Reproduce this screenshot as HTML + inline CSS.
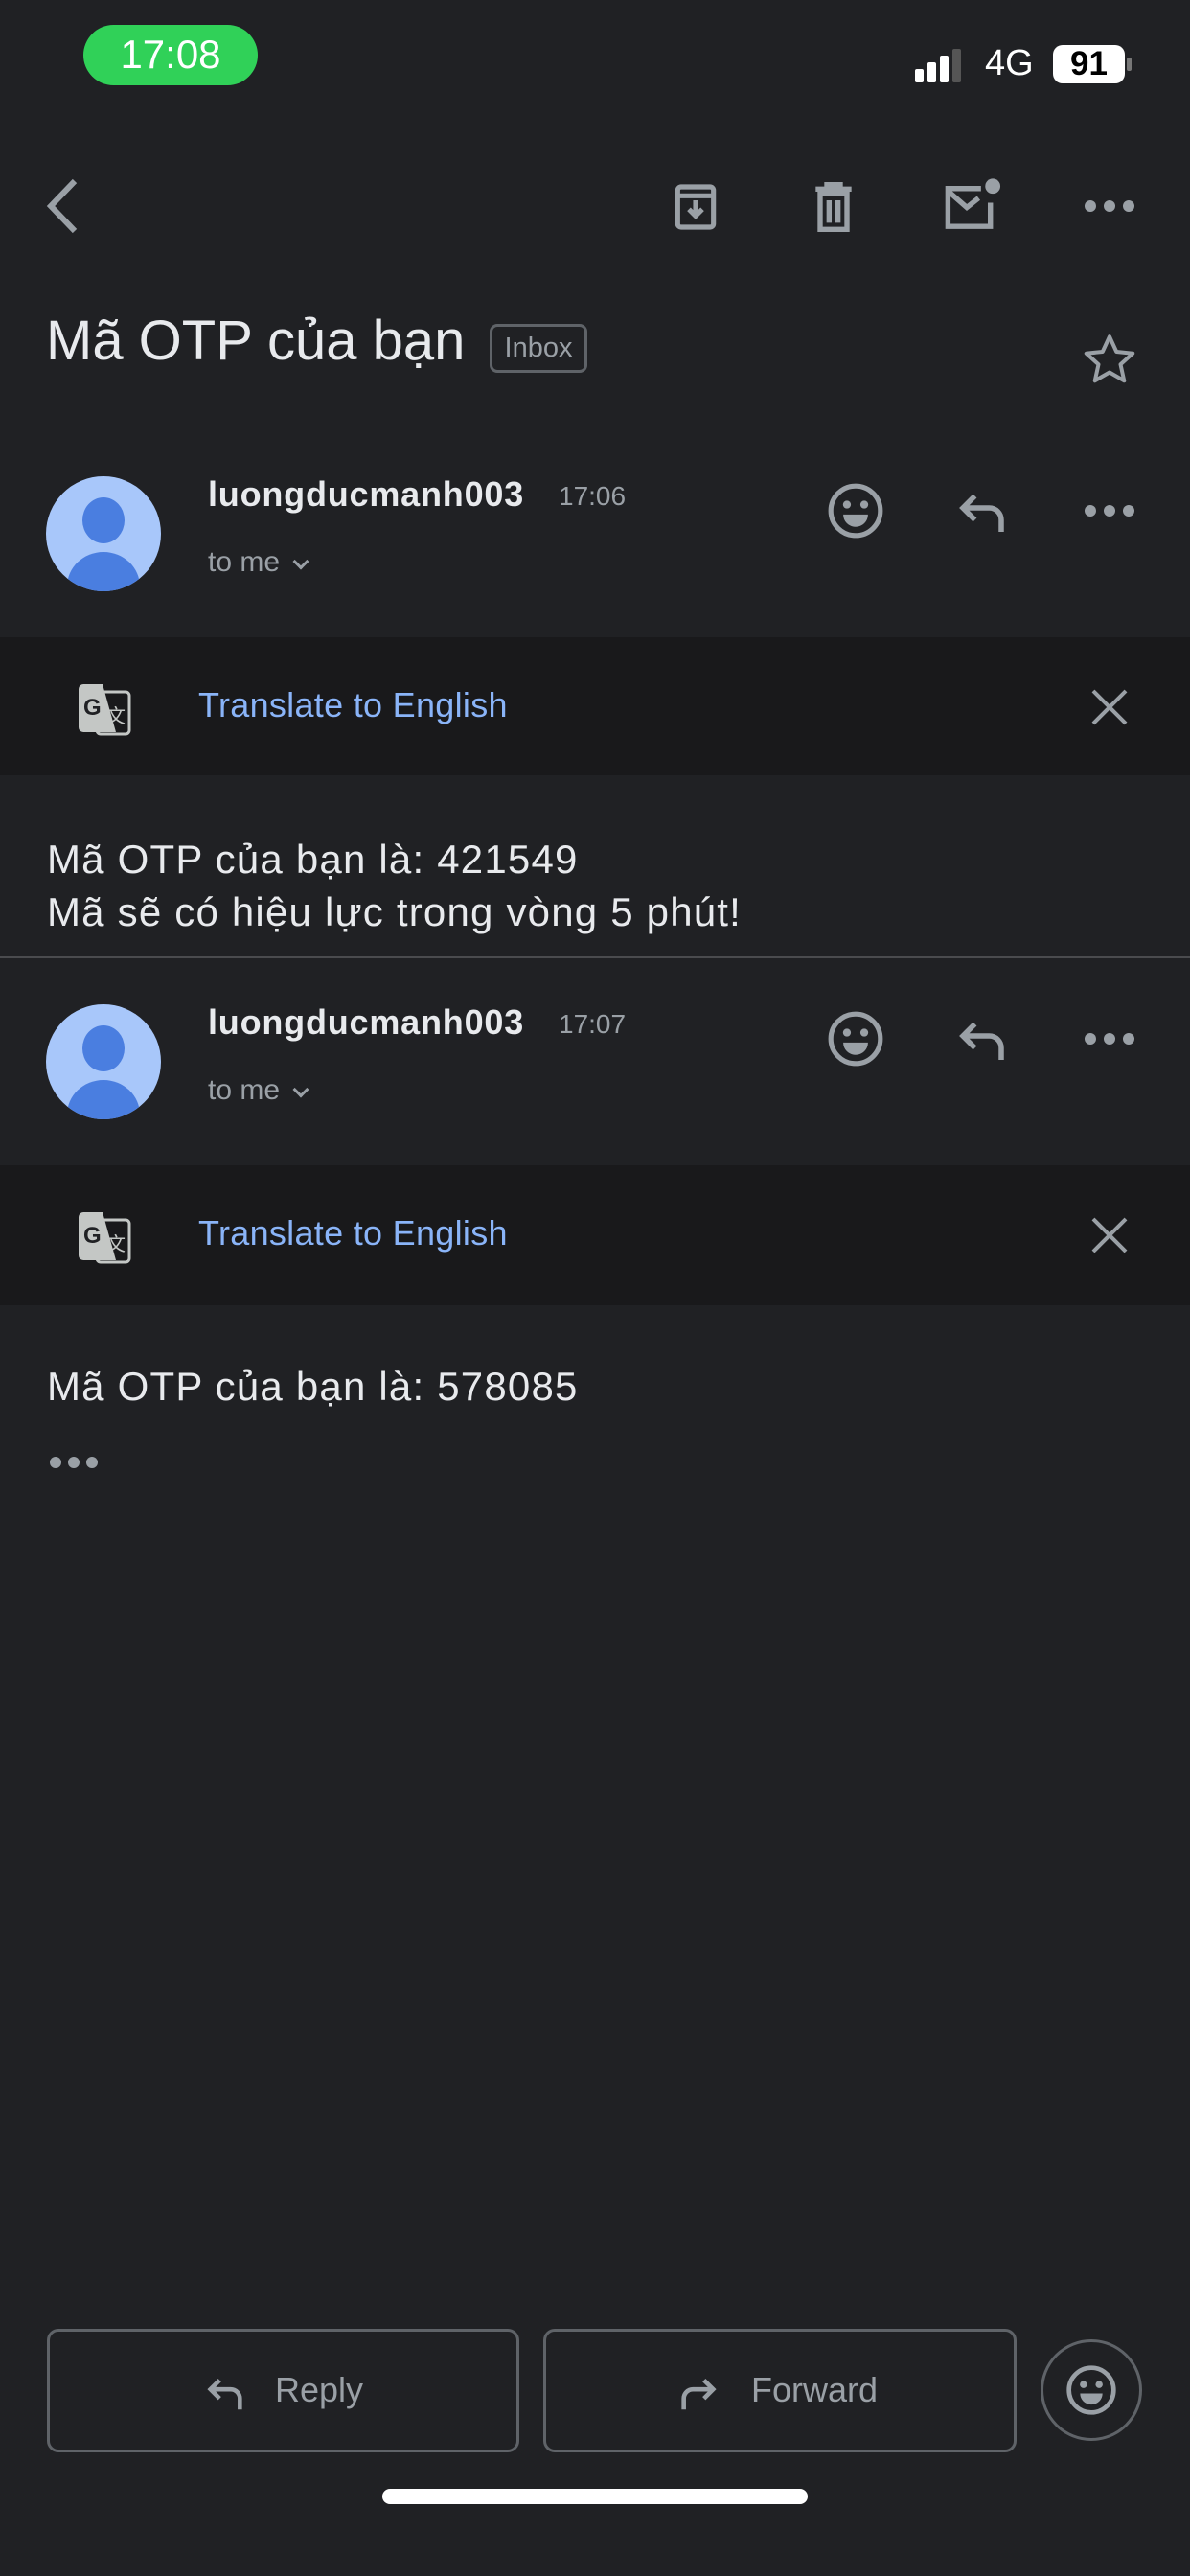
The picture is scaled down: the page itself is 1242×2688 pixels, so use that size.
<!DOCTYPE html>
<html><head><meta charset="utf-8"><style>
*{margin:0;padding:0;box-sizing:border-box}
body{width:1242px;height:2688px;background:#202124;position:relative;overflow:hidden;font-family:"Liberation Sans",sans-serif;color:#e8eaed}
.a{position:absolute}
.t{white-space:nowrap}
.bar{position:absolute;left:0;width:1242px;background:#19191b}
.nm{font-size:36px;font-weight:bold;color:#e8eaed;letter-spacing:0.8px}
.tm{font-size:30px;color:#9aa0a6}
.tr{font-size:36px;color:#8ab4f8;letter-spacing:0.3px}
.bd{font-size:42px;line-height:55px;color:#e8eaed;letter-spacing:1.2px}
</style></head><body>
<!-- status -->
<div class="a" style="left:87px;top:26px;width:182px;height:63px;border-radius:32px;background:#30d158"></div>
<div class="a t" style="left:87px;top:28px;width:182px;text-align:center;font-size:42px;line-height:58px;color:#fff;font-weight:500">17:08</div>
<svg class="a" style="left:955px;top:50px" width="56" height="36"><rect x="0" y="22" width="9" height="14" rx="2" fill="#fff"/><rect x="13" y="15" width="9" height="21" rx="2" fill="#fff"/><rect x="26" y="8" width="9" height="28" rx="2" fill="#fff"/><rect x="39" y="1" width="9" height="35" rx="2" fill="#555"/></svg>
<div class="a t" style="left:1028px;top:45px;font-size:38px;color:#fff">4G</div>
<div class="a" style="left:1099px;top:47px;width:75px;height:40px;border-radius:10px;background:#fff"></div>
<div class="a" style="left:1176px;top:60px;width:5px;height:14px;border-radius:2px;background:#777"></div>
<div class="a t" style="left:1099px;top:46px;width:75px;text-align:center;font-size:35px;font-weight:bold;color:#000;line-height:42px">91</div>
<!-- toolbar -->
<svg class="a" style="left:45px;top:185px" width="40" height="60"><path d="M33 4 L8 30 L33 56" stroke="#9aa0a6" stroke-width="6" fill="none"/></svg>
<svg class="a" style="left:698px;top:188px" width="56" height="56" viewBox="0 0 24 24"><rect x="4" y="3" width="16" height="18" rx="1.5" stroke="#9aa0a6" stroke-width="2.2" fill="none"/><path d="M4 7h16" stroke="#9aa0a6" stroke-width="2.2"/><path d="M12 9v7M9 13l3 3 3-3" stroke="#9aa0a6" stroke-width="2.2" fill="none"/></svg>
<svg class="a" style="left:842px;top:188px" width="56" height="56" viewBox="0 0 24 24"><path d="M4 4h16M9 4V2h6v2M6 6h12v16H6z M10 9v10M14 9v10" stroke="#9aa0a6" stroke-width="2.3" fill="none"/></svg>
<svg class="a" style="left:982px;top:184px" width="64" height="60" viewBox="0 0 26 24"><path d="M17 5H3v16h18V11" stroke="#9aa0a6" stroke-width="2.2" fill="none"/><path d="M3 6l8 7 5-4" stroke="#9aa0a6" stroke-width="2.2" fill="none"/><circle cx="22" cy="4" r="3.2" fill="#9aa0a6"/></svg>
<svg class="a" style="left:1130px;top:200px" width="56" height="30"><circle cx="8" cy="15" r="6" fill="#9aa0a6"/><circle cx="28" cy="15" r="6" fill="#9aa0a6"/><circle cx="48" cy="15" r="6" fill="#9aa0a6"/></svg>
<!-- title -->
<div class="a t" style="left:48px;top:320px;font-size:58px;line-height:72px;color:#e8eaed">Mã OTP của bạn</div>
<div class="a t" style="left:511px;top:338px;width:102px;height:51px;border:3px solid #5f6368;border-radius:8px;font-size:29px;line-height:45px;text-align:center;color:#9aa0a6">Inbox</div>
<svg class="a" style="left:1128px;top:345px" width="60" height="60" viewBox="0 0 24 24"><path d="M12 2.5l2.9 6.3 6.8.7-5.1 4.6 1.5 6.8L12 17.4l-6.1 3.5 1.5-6.8-5.1-4.6 6.8-.7z" stroke="#9aa0a6" stroke-width="1.6" fill="none" stroke-linejoin="round"/></svg>

<!-- msg1 -->
<svg class="a" style="left:48px;top:497px" width="120" height="120" viewBox="0 0 120 120"><defs><clipPath id="c1"><circle cx="60" cy="60" r="60"/></clipPath></defs><circle cx="60" cy="60" r="60" fill="#a8c7fa"/><g clip-path="url(#c1)"><ellipse cx="60" cy="46" rx="22" ry="24" fill="#4a7ee0"/><ellipse cx="60" cy="115" rx="38" ry="36" fill="#4a7ee0"/></g></svg>
<div class="a t nm" style="left:217px;top:495px">luongducmanh003</div>
<div class="a t" style="left:583px;top:502px;font-size:28px;color:#9aa0a6">17:06</div>
<div class="a t tm" style="left:217px;top:570px">to me <span style="display:inline-block;margin-left:8px;width:12px;height:12px;border-right:3px solid #9aa0a6;border-bottom:3px solid #9aa0a6;transform:rotate(45deg);position:relative;top:-4px"></span></div>
<svg class="a" style="left:862px;top:502px" width="62" height="62" viewBox="0 0 24 24"><circle cx="12" cy="12" r="10" stroke="#9aa0a6" stroke-width="2" fill="none"/><circle cx="8.5" cy="9.5" r="1.6" fill="#9aa0a6"/><circle cx="15.5" cy="9.5" r="1.6" fill="#9aa0a6"/><path d="M7 13.5h10a5 5 0 0 1-10 0z" fill="#9aa0a6"/></svg>
<svg class="a" style="left:995px;top:505px" width="60" height="60" viewBox="0 0 24 24"><path d="M20 20v-5a5 5 0 0 0-5-5H4M9 5L4 10l5 5" stroke="#9aa0a6" stroke-width="2.2" fill="none"/></svg>
<svg class="a" style="left:1130px;top:518px" width="56" height="30"><circle cx="8" cy="15" r="6" fill="#9aa0a6"/><circle cx="28" cy="15" r="6" fill="#9aa0a6"/><circle cx="48" cy="15" r="6" fill="#9aa0a6"/></svg>

<div class="bar" style="top:665px;height:144px"></div>
<svg class="a" style="left:79px;top:710px" width="60" height="60" viewBox="0 0 60 60"><path d="M8 4h20l14 50H8a5 5 0 0 1-5-5V9a5 5 0 0 1 5-5z" fill="#c4c7c5"/><rect x="22" y="12" width="34" height="44" rx="4" stroke="#c4c7c5" stroke-width="3" fill="none"/><text x="8" y="36" font-family="Liberation Sans" font-weight="bold" font-size="24" fill="#202124">G</text><text x="32" y="44" font-family="Liberation Sans" font-size="20" fill="#c4c7c5">文</text></svg>
<div class="a t tr" style="left:207px;top:715px">Translate to English</div>
<svg class="a" style="left:1138px;top:718px" width="40" height="40"><path d="M3 3L37 37M37 3L3 37" stroke="#9aa0a6" stroke-width="4"/></svg>

<div class="a t bd" style="left:49px;top:869px">Mã OTP của bạn là: 421549<br>Mã sẽ có hiệu lực trong vòng 5 phút!</div>
<div class="a" style="left:0;top:998px;width:1242px;height:2px;background:#4a4b4e"></div>

<!-- msg2 -->
<svg class="a" style="left:48px;top:1048px" width="120" height="120" viewBox="0 0 120 120"><defs><clipPath id="c2"><circle cx="60" cy="60" r="60"/></clipPath></defs><circle cx="60" cy="60" r="60" fill="#a8c7fa"/><g clip-path="url(#c2)"><ellipse cx="60" cy="46" rx="22" ry="24" fill="#4a7ee0"/><ellipse cx="60" cy="115" rx="38" ry="36" fill="#4a7ee0"/></g></svg>
<div class="a t nm" style="left:217px;top:1046px">luongducmanh003</div>
<div class="a t" style="left:583px;top:1053px;font-size:28px;color:#9aa0a6">17:07</div>
<div class="a t tm" style="left:217px;top:1121px">to me <span style="display:inline-block;margin-left:8px;width:12px;height:12px;border-right:3px solid #9aa0a6;border-bottom:3px solid #9aa0a6;transform:rotate(45deg);position:relative;top:-4px"></span></div>
<svg class="a" style="left:862px;top:1053px" width="62" height="62" viewBox="0 0 24 24"><circle cx="12" cy="12" r="10" stroke="#9aa0a6" stroke-width="2" fill="none"/><circle cx="8.5" cy="9.5" r="1.6" fill="#9aa0a6"/><circle cx="15.5" cy="9.5" r="1.6" fill="#9aa0a6"/><path d="M7 13.5h10a5 5 0 0 1-10 0z" fill="#9aa0a6"/></svg>
<svg class="a" style="left:995px;top:1056px" width="60" height="60" viewBox="0 0 24 24"><path d="M20 20v-5a5 5 0 0 0-5-5H4M9 5L4 10l5 5" stroke="#9aa0a6" stroke-width="2.2" fill="none"/></svg>
<svg class="a" style="left:1130px;top:1069px" width="56" height="30"><circle cx="8" cy="15" r="6" fill="#9aa0a6"/><circle cx="28" cy="15" r="6" fill="#9aa0a6"/><circle cx="48" cy="15" r="6" fill="#9aa0a6"/></svg>

<div class="bar" style="top:1216px;height:146px"></div>
<svg class="a" style="left:79px;top:1261px" width="60" height="60" viewBox="0 0 60 60"><path d="M8 4h20l14 50H8a5 5 0 0 1-5-5V9a5 5 0 0 1 5-5z" fill="#c4c7c5"/><rect x="22" y="12" width="34" height="44" rx="4" stroke="#c4c7c5" stroke-width="3" fill="none"/><text x="8" y="36" font-family="Liberation Sans" font-weight="bold" font-size="24" fill="#202124">G</text><text x="32" y="44" font-family="Liberation Sans" font-size="20" fill="#c4c7c5">文</text></svg>
<div class="a t tr" style="left:207px;top:1266px">Translate to English</div>
<svg class="a" style="left:1138px;top:1269px" width="40" height="40"><path d="M3 3L37 37M37 3L3 37" stroke="#9aa0a6" stroke-width="4"/></svg>

<div class="a t bd" style="left:49px;top:1419px">Mã OTP của bạn là: 578085</div>
<svg class="a" style="left:50px;top:1516px" width="56" height="20"><circle cx="8" cy="10" r="6" fill="#9aa0a6"/><circle cx="27" cy="10" r="6" fill="#9aa0a6"/><circle cx="46" cy="10" r="6" fill="#9aa0a6"/></svg>

<!-- bottom buttons -->
<div class="a" style="left:49px;top:2430px;width:493px;height:129px;border:3px solid #5f6368;border-radius:12px"></div>
<div class="a" style="left:567px;top:2430px;width:494px;height:129px;border:3px solid #5f6368;border-radius:12px"></div>
<svg class="a" style="left:212px;top:2474px" width="46" height="46" viewBox="0 0 24 24"><path d="M20 21v-6a5 5 0 0 0-5-5H4M9 5L4 10l5 5" stroke="#9aa0a6" stroke-width="2.4" fill="none"/></svg>
<div class="a t" style="left:287px;top:2473px;font-size:36px;color:#9aa0a6">Reply</div>
<svg class="a" style="left:706px;top:2474px" width="46" height="46" viewBox="0 0 24 24"><path d="M4 21v-6a5 5 0 0 1 5-5h11M15 5l5 5-5 5" stroke="#9aa0a6" stroke-width="2.4" fill="none"/></svg>
<div class="a t" style="left:784px;top:2473px;font-size:36px;color:#9aa0a6">Forward</div>
<div class="a" style="left:1086px;top:2441px;width:106px;height:106px;border:3px solid #5f6368;border-radius:50%"></div>
<svg class="a" style="left:1111px;top:2466px" width="56" height="56" viewBox="0 0 24 24"><circle cx="12" cy="12" r="10" stroke="#9aa0a6" stroke-width="2" fill="none"/><circle cx="8.5" cy="9.5" r="1.6" fill="#9aa0a6"/><circle cx="15.5" cy="9.5" r="1.6" fill="#9aa0a6"/><path d="M7 13.5h10a5 5 0 0 1-10 0z" fill="#9aa0a6"/></svg>
<div class="a" style="left:399px;top:2597px;width:444px;height:16px;border-radius:8px;background:#fff"></div>
</body></html>
